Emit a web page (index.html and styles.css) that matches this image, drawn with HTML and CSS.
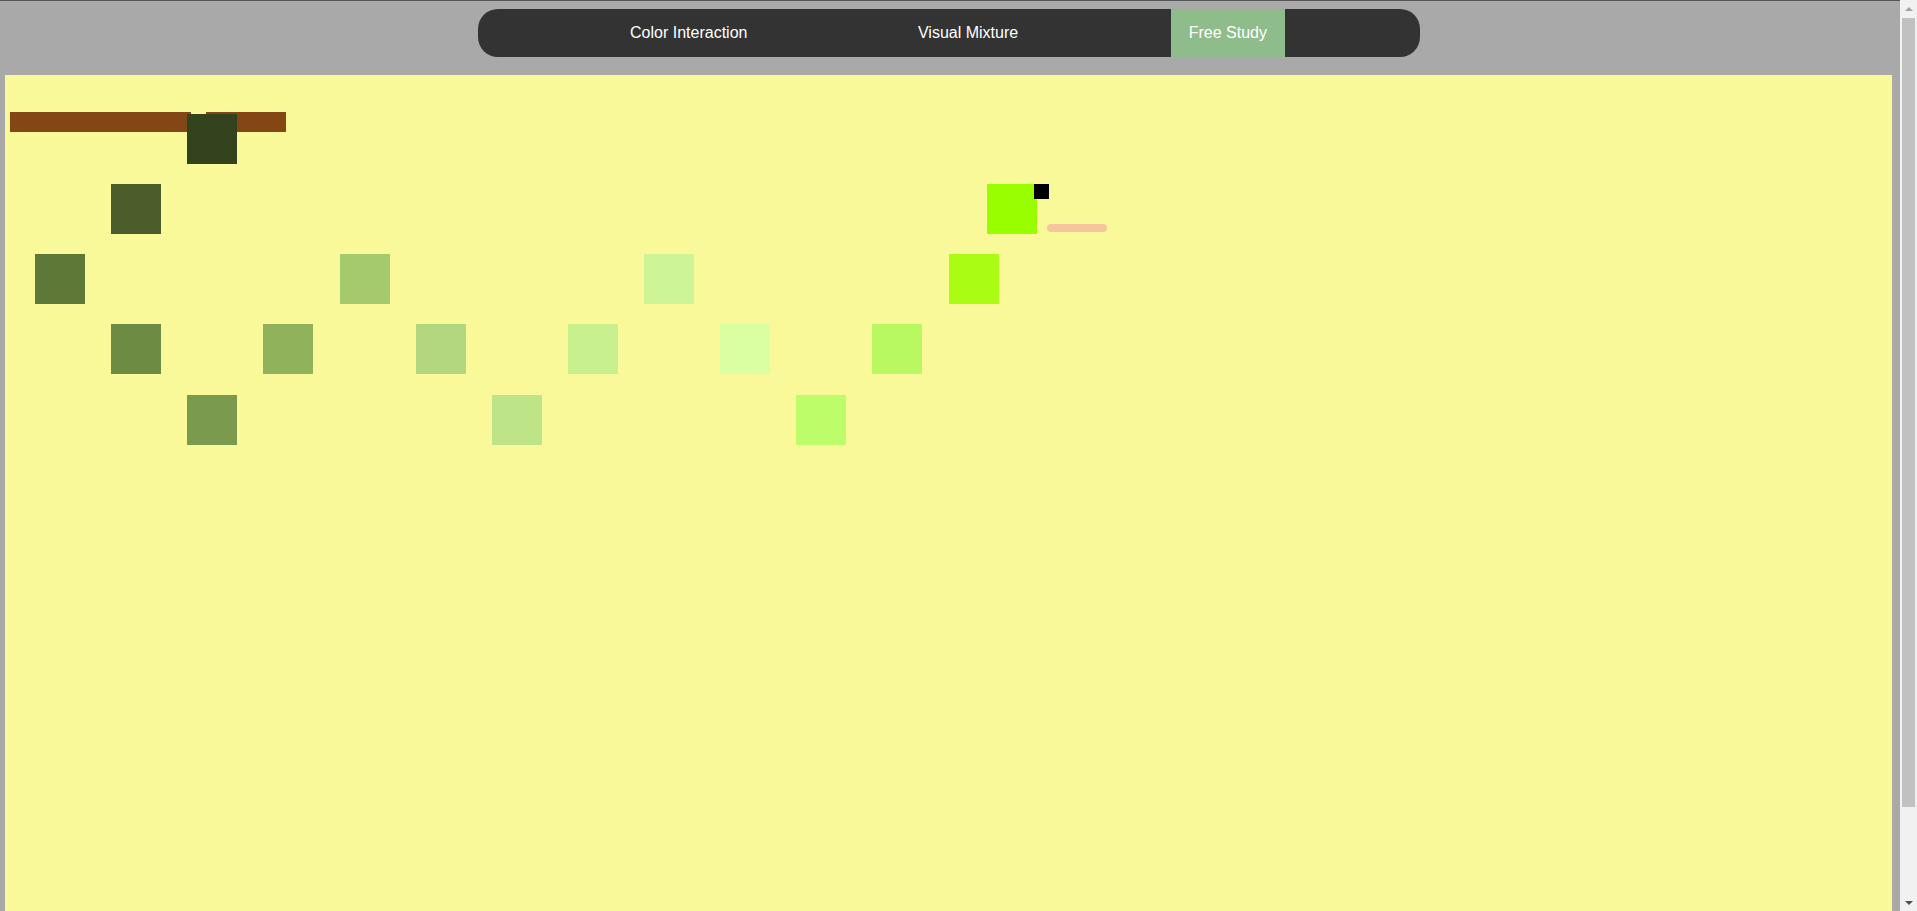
FILE: index.html
```html
<!DOCTYPE html>
<html lang="en">
<head>
<meta charset="utf-8">
<title>Free Study</title>
<link rel="stylesheet" href="styles.css">
</head>
<body>
<div class="page">
  <header class="top">
    <nav class="nav">
      <a class="nav-item" href="#">Color Interaction</a>
      <a class="nav-item" href="#">Visual Mixture</a>
      <a class="nav-item nav-item-active" href="#">Free Study</a>
    </nav>
  </header>
  <main class="stage">
    <svg class="board" width="1887" height="930" viewBox="0 0 1887 930" xmlns="http://www.w3.org/2000/svg">
      <rect x="5" y="37" width="181" height="20" fill="#834614"/>
      <rect x="201" y="37" width="80" height="20" fill="#834614"/>
      <rect x="182" y="39" width="50" height="50" fill="#33431e"/>

      <rect x="106" y="109" width="50" height="50" fill="#4a5d2b"/>

      <rect x="30" y="179" width="50" height="50" fill="#5e7937"/>
      <rect x="335" y="179" width="50" height="50" fill="#a5ca6e"/>
      <rect x="639" y="179" width="50" height="50" fill="#cef595"/>
      <rect x="944" y="179" width="50" height="50" fill="#aafc14"/>

      <rect x="106" y="249" width="50" height="50" fill="#6d8b42"/>
      <rect x="258" y="249" width="50" height="50" fill="#8fb25b"/>
      <rect x="411" y="249" width="50" height="50" fill="#b2d77e"/>
      <rect x="563" y="249" width="50" height="50" fill="#c8f08e"/>
      <rect x="715" y="249" width="50" height="50" fill="#d9ffa0"/>
      <rect x="867" y="249" width="50" height="50" fill="#b8f860"/>

      <rect x="182" y="320" width="50" height="50" fill="#7a9b4d"/>
      <rect x="487" y="320" width="50" height="50" fill="#bde488"/>
      <rect x="791" y="320" width="50" height="50" fill="#befd6a"/>

      <rect x="982" y="109" width="50" height="50" fill="#99ff00"/>
      <rect x="1029" y="109" width="15" height="15" fill="#000000"/>
      <rect x="1042" y="149" width="60" height="8" rx="4" ry="4" fill="#f7c59b"/>
    </svg>
  </main>
</div>
<div class="scrollbar" aria-hidden="true">
  <div class="scroll-btn"><span class="arrow arrow-up"></span></div>
  <div class="scroll-track"><div class="scroll-thumb"></div></div>
  <div class="scroll-btn"><span class="arrow arrow-down"></span></div>
</div>
</body>
</html>
```

FILE: styles.css
```css
html {
  border-top: 1px solid #555555;
  background: #a9a9a9;
}

body {
  margin: 0;
  background: #a9a9a9;
  font-family: "Liberation Sans", Arial, sans-serif;
}

.page {
  width: 1900px;
  padding-bottom: 8px;
}

.top {
  padding: 8px 8px 18px 5px;
}

.nav {
  width: 942px;
  height: 48px;
  margin: 0 auto;
  background: #333333;
  border-radius: 20px;
  display: flex;
  justify-content: space-evenly;
  overflow: hidden;
}

.nav-item {
  display: block;
  padding: 0 18px;
  line-height: 48px;
  font-size: 16px;
  color: #ffffff;
  text-decoration: none;
}

.nav-item-active {
  background: #8fbc8b;
}

.stage {
  padding: 0 8px 0 5px;
}

.board {
  display: block;
  background: #f9f99a;
}

.scrollbar {
  position: fixed;
  top: 0;
  right: 0;
  width: 17px;
  height: 100vh;
  background: #f1f1f1;
  display: flex;
  flex-direction: column;
}

.scroll-btn {
  height: 17px;
  display: flex;
  align-items: center;
  justify-content: center;
  flex: none;
}

.scroll-track {
  flex: 1;
  padding: 1px 2px 0 2px;
}

.scroll-thumb {
  height: 789px;
  background: #c1c1c1;
}

.arrow {
  display: block;
  width: 0;
  height: 0;
  border-left: 4px solid transparent;
  border-right: 4px solid transparent;
}

.arrow-up {
  border-bottom: 4px solid #a3a3a3;
}

.arrow-down {
  border-top: 4px solid #505050;
}
```
